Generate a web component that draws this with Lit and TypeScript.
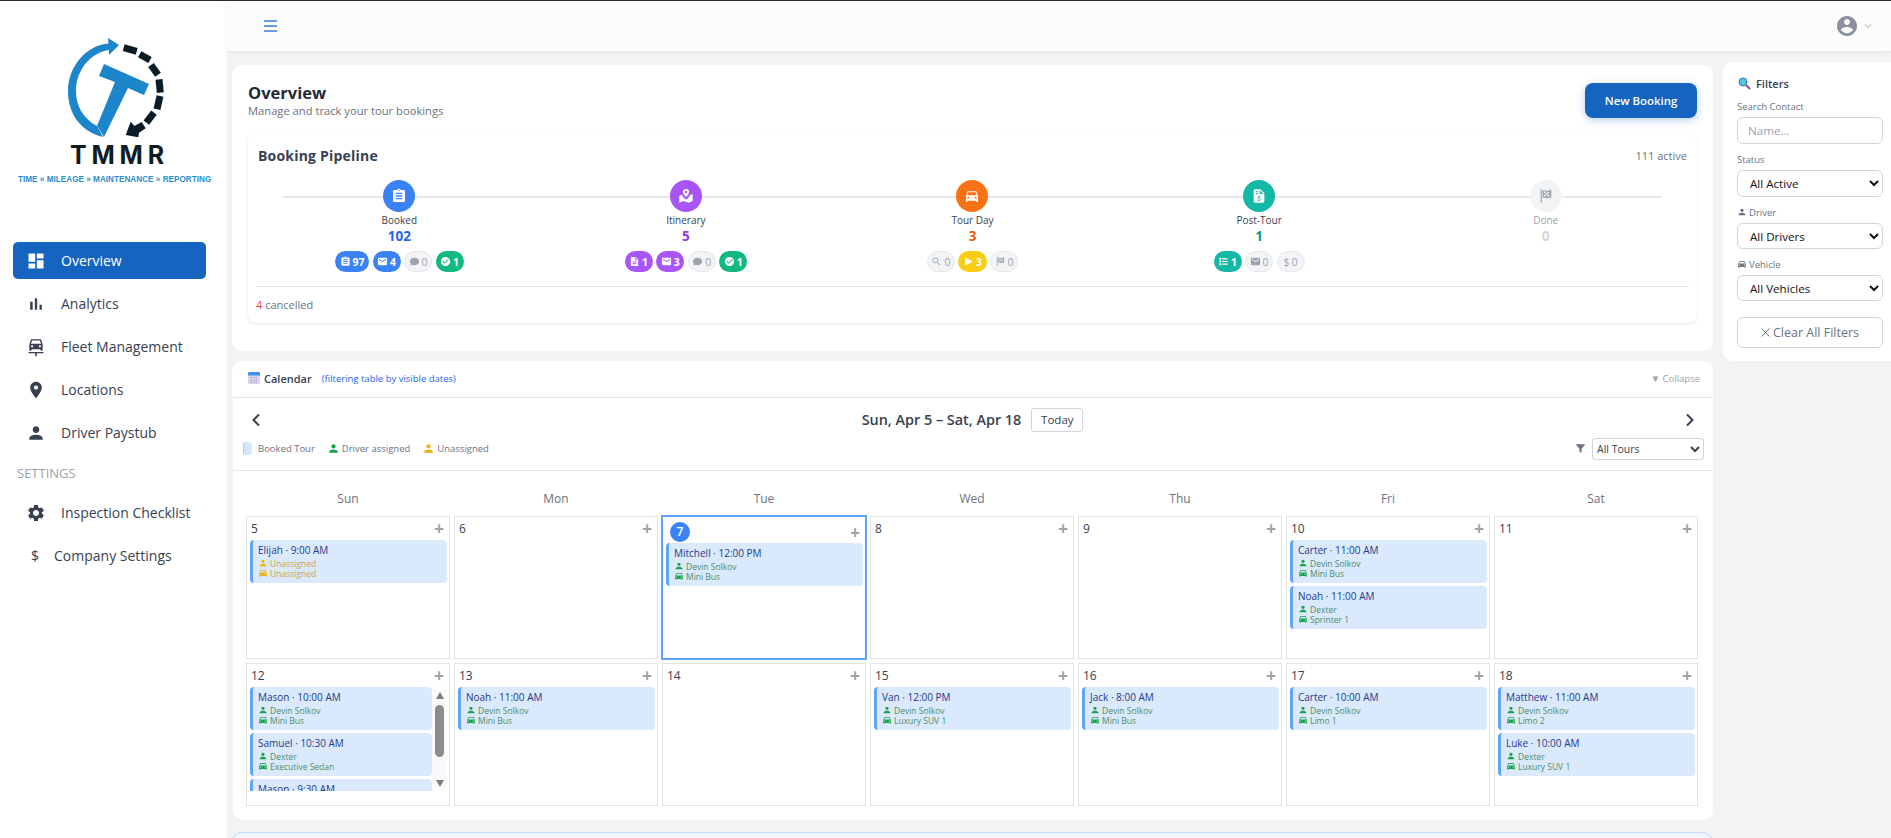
import { LitElement, css, html, svg, nothing } from "lit";
import { customElement } from "lit/decorators.js";

const ICONS: Record<string, string> = {
  dashboard: "M3 13h8V3H3v10zm0 8h8v-6H3v6zm10 0h8V11h-8v10zm0-18v6h8V3h-8z",
  chart: "M5 9.2h3V19H5zM10.6 5h2.8v14h-2.8zm5.6 8H19v6h-2.8z",
  fleet:
    "M18.3 3.6c-.2-.6-.7-1-1.3-1H7c-.6 0-1.1.4-1.3 1L4 9v6.500c0 .5.4.9.9.9h.9c.5 0 .9-.4.9-.9v-.9h10.600v.9c0 .5.4.9.9.9h.9c.5 0 .9-.4.9-.9V9l-1.700-5.400zM7.300 12.500c-.7 0-1.300-.6-1.300-1.300s.6-1.300 1.300-1.300 1.300.6 1.300 1.300-.6 1.300-1.300 1.300zm9.400 0c-.7 0-1.300-.6-1.300-1.300s.6-1.300 1.300-1.300 1.300.6 1.300 1.300-.6 1.300-1.300 1.300zM6 8l1.300-3.800h9.400L18 8H6zM3 18h18v1.600h-8V23h-2v-3.400H3z",
  pin: "M12 2C8.130 2 5 5.130 5 9c0 5.250 7 13 7 13s7-7.750 7-13c0-3.870-3.130-7-7-7zm0 9.500c-1.380 0-2.500-1.120-2.500-2.500s1.120-2.500 2.500-2.500 2.500 1.120 2.500 2.500-1.120 2.500-2.500 2.500z",
  person: "M12 12c2.210 0 4-1.790 4-4s-1.790-4-4-4-4 1.790-4 4 1.790 4 4 4zm0 2c-2.670 0-8 1.340-8 4v2h16v-2c0-2.660-5.330-4-8-4z",
  gear: "M19.140 12.940c.04-.3.06-.61.06-.94 0-.32-.02-.64-.07-.94l2.030-1.580c.18-.14.23-.41.12-.61l-1.920-3.320c-.12-.22-.37-.29-.59-.22l-2.390.96c-.5-.38-1.030-.7-1.620-.94l-.36-2.540c-.04-.24-.24-.41-.48-.41h-3.840c-.24 0-.43.17-.47.41l-.36 2.540c-.59.24-1.130.57-1.620.94l-2.390-.96c-.22-.08-.47 0-.59.22L2.740 8.870c-.12.21-.08.47.12.61l2.030 1.580c-.05.3-.09.63-.09.94s.02.64.07.94l-2.030 1.580c-.18.14-.23.41-.12.61l1.920 3.320c.12.22.37.29.59.22l2.390-.96c.5.38 1.030.7 1.620.94l.36 2.540c.05.24.24.41.48.41h3.840c.24 0 .44-.17.47-.41l.36-2.540c.59-.24 1.130-.56 1.620-.94l2.390.96c.22.08.47 0 .59-.22l1.920-3.320c.12-.22.07-.47-.12-.61l-2.010-1.580zM12 15.600c-1.980 0-3.600-1.620-3.600-3.600s1.620-3.600 3.600-3.600 3.600 1.620 3.600 3.600-1.620 3.600-3.600 3.600z",
  clipboard:
    "M19 3h-4.180C14.400 1.840 13.300 1 12 1c-1.300 0-2.400.84-2.820 2H5c-1.100 0-2 .9-2 2v14c0 1.100.9 2 2 2h14c1.100 0 2-.9 2-2V5c0-1.100-.9-2-2-2zm-7 0c.55 0 1 .45 1 1s-.45 1-1 1-1-.45-1-1 .45-1 1-1zm5 14H7v-2h10v2zm0-4H7v-2h10v2zm0-4H7V7h10v2z",
  map: "M12 1.500c-2.600 0-4.700 2-4.700 4.500 0 2.300 3.100 5.800 4.700 7.500 1.600-1.700 4.700-5.200 4.700-7.500 0-2.500-2.100-4.500-4.700-4.500zm0 6.300c-1 0-1.800-.8-1.800-1.800s.8-1.800 1.800-1.800 1.800.8 1.800 1.800-.8 1.800-1.800 1.800zM5.500 10 2 11.500V22l6-2.500 8 2.500 6-2.500V9l-3.700 1.400c-1 2-2.900 4.300-5 6.300h-2.600c-1.900-1.800-3.500-3.800-4.700-5.700z",
  car: "M18.920 6.010C18.720 5.420 18.160 5 17.500 5h-11c-.66 0-1.210.42-1.420 1.010L3 12v8c0 .55.45 1 1 1h1c.55 0 1-.45 1-1v-1h12v1c0 .55.45 1 1 1h1c.55 0 1-.45 1-1v-8l-2.080-5.990zM6.500 16c-.83 0-1.500-.67-1.500-1.500S5.670 13 6.500 13s1.500.67 1.500 1.500S7.330 16 6.500 16zm11 0c-.83 0-1.500-.67-1.500-1.500s.67-1.500 1.500-1.500 1.500.67 1.500 1.500-.67 1.500-1.500 1.500zM5 11l1.500-4.500h11L19 11H5z",
  invoice:
    "M14 2H6c-1.100 0-2 .9-2 2v16c0 1.100.9 2 2 2h12c1.100 0 2-.9 2-2V8l-6-6zM7 5h4v1.500H7V5zm0 3h4v1.500H7V8zm5.800 11v1.200h-1.500V19c-1-.2-1.800-.8-1.900-1.800h1.200c.1.500.6.8 1.400.8s1.200-.3 1.200-.8c0-.4-.3-.7-1.300-.9-1.300-.3-2.200-.8-2.200-1.900 0-.9.7-1.500 1.600-1.700V11.500h1.500v1.200c1 .2 1.600.9 1.600 1.800h-1.200c0-.6-.4-.9-1.100-.9s-1.200.3-1.200.8c0 .4.4.6 1.300.9 1 .2 2.200.6 2.200 1.900 0 1-.7 1.600-1.600 1.800zM13 9V3.500L18.500 9H13z",
  flag: "M4 2h1.800v20H4zM7 3.500c3-1 5 .8 7.500.6 1.900-.1 3.500-.6 5.500-1.300v11.400c-2 .8-3.600 1.200-5.500 1.300-2.500.2-4.500-1.500-7.500-.6V3.500zm2 1.400v2.500l2.500.3V5.200L9 4.900zm5 1.200v2.500l3-.4V5.700l-3 .4zM11.500 7.700v2.500l2.500.4V8.100l-2.500-.4zM9 9.900v2.500l2.500-.2v-2l-2.500-.3zm5 .7v2.500l3-.5V10.200l-3 .4z",
  mail: "M20 4H4c-1.100 0-2 .9-2 2v12c0 1.100.9 2 2 2h16c1.100 0 2-.9 2-2V6c0-1.100-.9-2-2-2zm0 4-8 5-8-5V6l8 5 8-5v2z",
  comment: "M12 4C6.500 4 2 7.600 2 12c0 1.900.8 3.600 2.200 5L3 21l4.600-1.800c1.400.5 2.900.8 4.400.8 5.500 0 10-3.600 10-8s-4.500-8-10-8z",
  check:
    "M12 2C6.480 2 2 6.480 2 12s4.480 10 10 10 10-4.480 10-10S17.520 2 12 2zm-2 15-5-5 1.410-1.410L10 14.170l7.590-7.590L19 8l-9 9z",
  file: "M14 2H6c-1.100 0-2 .9-2 2v16c0 1.100.9 2 2 2h12c1.100 0 2-.9 2-2V8l-6-6zm2 16H8v-2h8v2zm0-4H8v-2h8v2zm-3-5V3.500L18.500 9H13z",
  search:
    "M15.500 14h-.79l-.28-.27C15.410 12.590 16 11.110 16 9.500 16 5.910 13.090 3 9.500 3S3 5.910 3 9.500 5.910 16 9.500 16c1.610 0 3.090-.59 4.230-1.570l.27.28v.79l5 4.990L20.490 19l-4.990-5zm-6 0C7.010 14 5 11.990 5 9.500S7.010 5 9.500 5 14 7.010 14 9.500 11.990 14 9.500 14z",
  play: "M5 3l16 9-16 9z",
  list: "M9 5h12v2.500H9zm0 5.800h12v2.500H9zm0 5.700h12V19H9zM3 4h4v4H3zm0 6h4v4H3zm0 6h4v4H3z",
  filter: "M3 4h18l-7 8.500V20l-4-2v-5.500z",
};

const icon = (name: string, size: number) => html`<svg class="ic" width=${size} height=${size} viewBox="0 0 24 24" fill="currentColor"><path d=${ICONS[name]}></path></svg>`;

const NAV = [
  { label: "Overview", icon: "dashboard", active: true },
  { label: "Analytics", icon: "chart" },
  { label: "Fleet Management", icon: "fleet" },
  { label: "Locations", icon: "pin" },
  { label: "Driver Paystub", icon: "person" },
];

type Chip = { icon?: string; n: number; on?: string };

const STAGES: { label: string; icon: string; count: number; color: string; num: string; chips: Chip[] }[] = [
  {
    label: "Booked", icon: "clipboard", count: 102, color: "#3b82f6", num: "#2563eb",
    chips: [
      { icon: "clipboard", n: 97, on: "#3b82f6" },
      { icon: "mail", n: 4, on: "#3b82f6" },
      { icon: "comment", n: 0 },
      { icon: "check", n: 1, on: "#10b981" },
    ],
  },
  {
    label: "Itinerary", icon: "map", count: 5, color: "#a855f7", num: "#9333ea",
    chips: [
      { icon: "file", n: 1, on: "#a855f7" },
      { icon: "mail", n: 3, on: "#a855f7" },
      { icon: "comment", n: 0 },
      { icon: "check", n: 1, on: "#10b981" },
    ],
  },
  {
    label: "Tour Day", icon: "car", count: 3, color: "#f97316", num: "#ea580c",
    chips: [
      { icon: "search", n: 0 },
      { icon: "play", n: 3, on: "#facc15" },
      { icon: "flag", n: 0 },
    ],
  },
  {
    label: "Post-Tour", icon: "invoice", count: 1, color: "#14b8a6", num: "#0d9488",
    chips: [
      { icon: "list", n: 1, on: "#14b8a6" },
      { icon: "mail", n: 0 },
      { n: 0 },
    ],
  },
  { label: "Done", icon: "flag", count: 0, color: "#f3f4f6", num: "#d1d5db", chips: [] },
];

type Ev = { title: string; driver?: string; vehicle?: string };

const WEEKDAYS = ["Sun", "Mon", "Tue", "Wed", "Thu", "Fri", "Sat"];

const DAYS: { d: number; today?: boolean; scroll?: boolean; events?: Ev[] }[] = [
  { d: 5, events: [{ title: "Elijah · 9:00 AM" }] },
  { d: 6 },
  { d: 7, today: true, events: [{ title: "Mitchell · 12:00 PM", driver: "Devin Solkov", vehicle: "Mini Bus" }] },
  { d: 8 },
  { d: 9 },
  {
    d: 10,
    events: [
      { title: "Carter · 11:00 AM", driver: "Devin Solkov", vehicle: "Mini Bus" },
      { title: "Noah · 11:00 AM", driver: "Dexter", vehicle: "Sprinter 1" },
    ],
  },
  { d: 11 },
  {
    d: 12,
    scroll: true,
    events: [
      { title: "Mason · 10:00 AM", driver: "Devin Solkov", vehicle: "Mini Bus" },
      { title: "Samuel · 10:30 AM", driver: "Dexter", vehicle: "Executive Sedan" },
      { title: "Mason · 9:30 AM", driver: "Devin Solkov", vehicle: "Mini Bus" },
    ],
  },
  { d: 13, events: [{ title: "Noah · 11:00 AM", driver: "Devin Solkov", vehicle: "Mini Bus" }] },
  { d: 14 },
  { d: 15, events: [{ title: "Van · 12:00 PM", driver: "Devin Solkov", vehicle: "Luxury SUV 1" }] },
  { d: 16, events: [{ title: "Jack · 8:00 AM", driver: "Devin Solkov", vehicle: "Mini Bus" }] },
  { d: 17, events: [{ title: "Carter · 10:00 AM", driver: "Devin Solkov", vehicle: "Limo 1" }] },
  {
    d: 18,
    events: [
      { title: "Matthew · 11:00 AM", driver: "Devin Solkov", vehicle: "Limo 2" },
      { title: "Luke · 10:00 AM", driver: "Dexter", vehicle: "Luxury SUV 1" },
    ],
  },
];

// dashes of the logo ring, [x1, y1, x2, y2]
const DASHES = [
  [123.7, 47.7, 136.7, 51.3],
  [139.7, 54.3, 150, 60],
  [151, 65, 158, 74.7],
  [159, 79.3, 160.3, 92.7],
  [160, 96, 157, 109.3],
  [154, 112.7, 146.3, 122.7],
];

@customElement("app-root")
export class AppRoot extends LitElement {
  static styles = css`
    :host {
      display: block;
      height: 838px;
      overflow: hidden;
      font-family: "Open Sans", "Noto Sans", sans-serif;
      color: #374151;
      background: #f2f3f5;
    }
    * {
      box-sizing: border-box;
    }
    .ic {
      flex: none;
      display: block;
    }
    .shell {
      display: flex;
      height: 838px;
      border-top: 1px solid #2b2d31;
    }

    /* sidebar */
    .side {
      flex: none;
      width: 227px;
      background: #fff;
    }
    .logo {
      display: flex;
      flex-direction: column;
      height: 241px;
    }
    .logo svg {
      display: block;
      margin-top: 36px;
      margin-left: 60px;
    }
    .tmmr {
      margin: -8px 0 0 70px;
      font: 700 25px/28px "Inter", sans-serif;
      letter-spacing: 4.8px;
      color: #0f1c25;
    }
    .strap {
      margin: 6px 0 0 18px;
      font: 700 8.2px/10px "Liberation Sans", sans-serif;
      color: #2a8fd0;
      white-space: nowrap;
    }
    .nav {
      display: flex;
      align-items: center;
      height: 37px;
      margin: 0 21px 6px 13px;
      padding-left: 13px;
      border-radius: 5px;
      font-size: 14px;
      color: #374151;
      gap: 15px;
    }
    .nav.on {
      background: #1565c0;
      color: #fff;
    }
    .nav.money {
      gap: 0;
    }
    .nav .dollar {
      width: 28px;
      padding-left: 5px;
      font-size: 14px;
    }
    .group {
      margin: 12px 0 11px 17px;
      height: 20px;
      line-height: 20px;
      font-size: 13px;
      color: #9ca3af;
    }

    /* right side */
    .right {
      flex: 1;
      min-width: 0;
      display: flex;
      flex-direction: column;
    }
    .top {
      flex: none;
      height: 50px;
      background: #fbfcfb;
      box-shadow: 0 1px 5px rgba(0, 0, 0, 0.07);
      display: flex;
      align-items: center;
      justify-content: space-between;
      padding: 0 19px 0 37px;
    }
    .burger {
      width: 13px;
      height: 12px;
      border-top: 2px solid #6a9bdc;
      border-bottom: 2px solid #6a9bdc;
      position: relative;
    }
    .burger::after {
      content: "";
      position: absolute;
      left: 0;
      right: 0;
      top: 3px;
      height: 2px;
      background: #6a9bdc;
    }
    .user {
      display: flex;
      align-items: center;
      gap: 5px;
      color: #8a92a0;
    }
    .body {
      flex: 1;
      min-height: 0;
      display: flex;
      gap: 10px;
      padding: 11px 0 0 5px;
      align-items: flex-start;
    }
    .main {
      flex: none;
      width: 1481px;
      margin-top: 3px;
      display: flex;
      flex-direction: column;
    }
    .card {
      background: #fff;
      border-radius: 10px;
    }

    /* overview */
    .over {
      height: 286px;
      padding: 18px 16px 0;
      margin-bottom: 10px;
    }
    .over-head {
      display: flex;
      justify-content: space-between;
      height: 35px;
      margin-bottom: 17px;
    }
    h1 {
      margin: 0 0 1px;
      font-size: 16.500px;
      line-height: 19px;
      font-weight: 700;
      color: #1f2937;
    }
    .sub {
      font-size: 11.2px;
      line-height: 15px;
      color: #6b7280;
    }
    .btn-new {
      width: 112px;
      height: 35px;
      border: 0;
      border-radius: 8px;
      background: #1565c0;
      color: #fff;
      font: 600 11.4px "Open Sans", sans-serif;
      box-shadow: 0 2px 8px rgba(21, 101, 192, 0.3);
    }
    .pipe {
      height: 188px;
      border-radius: 8px;
      box-shadow: 0 1px 3px rgba(0, 0, 0, 0.12);
      padding: 10px 8px 0;
    }
    .pipe-head {
      display: flex;
      justify-content: space-between;
      align-items: center;
      height: 20px;
      padding: 0 2px;
      margin-bottom: 15px;
    }
    .pipe-head b {
      font-size: 14px;
      font-weight: 700;
      letter-spacing: 0.2px;
      color: #374151;
    }
    .pipe-head span {
      font-size: 11px;
      color: #6b7280;
    }
    .stages {
      position: relative;
      display: grid;
      grid-template-columns: repeat(5, 1fr);
      height: 93px;
    }
    .stages::before {
      content: "";
      position: absolute;
      left: 27px;
      right: 27px;
      top: 16px;
      height: 2px;
      background: #e5e7eb;
    }
    .stage {
      position: relative;
      display: flex;
      flex-direction: column;
      align-items: center;
    }
    .dot {
      width: 32px;
      height: 32px;
      border-radius: 50%;
      display: flex;
      align-items: center;
      justify-content: center;
      color: #fff;
    }
    .stage .lab {
      font-size: 10px;
      line-height: 16px;
      color: #374151;
    }
    .stage .num {
      font-size: 13.5px;
      line-height: 17px;
      font-weight: 700;
    }
    .stage.done .dot {
      color: #9ca3af;
    }
    .stage.done .lab {
      color: #9ca3af;
    }
    .chips {
      display: flex;
      gap: 3.500px;
      margin-top: 6px;
    }
    .chip {
      height: 21px;
      min-width: 28px;
      padding: 0 3.500px;
      border-radius: 11px;
      border: 1px solid #e5e7eb;
      background: #f3f4f6;
      color: #9ca3af;
      display: flex;
      align-items: center;
      justify-content: center;
      gap: 2px;
      font-size: 10.5px;
    }
    .chip.on {
      border-color: transparent;
      color: #fff;
      font-weight: 700;
    }
    .cancel {
      margin-top: 13px;
      border-top: 1px solid #e5e7eb;
      height: 36px;
      line-height: 35px;
      font-size: 11px;
      color: #6b7280;
    }
    .cancel i {
      font-style: normal;
      color: #ef4444;
    }

    /* calendar bar */
    .calbar {
      height: 36px;
      border-radius: 10px 10px 0 0;
      display: flex;
      align-items: center;
      gap: 3px;
      padding: 0 3px 2px 15px;
      margin-bottom: 1px;
      box-shadow: 0 1px 0 #e8e9ec;
    }
    .calbar b {
      font-size: 11px;
      font-weight: 600;
      color: #374151;
    }
    .calbar .note {
      margin-left: 7px;
      font-size: 9.5px;
      color: #2563eb;
    }
    .calbar .collapse {
      margin-left: auto;
      margin-right: 10px;
      font-size: 9.5px;
      color: #9ca3af;
    }

    /* calendar */
    .cal {
      height: 422px;
      margin-left: 1px;
      border-radius: 0 0 10px 10px;
      margin-bottom: 12px;
    }
    .cal-nav {
      display: flex;
      align-items: center;
      justify-content: space-between;
      height: 34px;
      padding: 9px 11px 0;
    }
    .cal-nav .mid {
      display: flex;
      align-items: center;
      gap: 10px;
      margin-right: 1px;
    }
    .cal-nav .mid span {
      font-size: 14.4px;
      font-weight: 600;
      color: #374151;
    }
    .today {
      width: 52px;
      height: 24px;
      padding: 0;
      background: #fff;
      border: 1px solid #d1d5db;
      border-radius: 3px;
      font: 11.5px "Open Sans", sans-serif;
      color: #374151;
    }
    .chev {
      width: 24px;
      display: flex;
      justify-content: center;
      color: #374151;
    }
    .cal-tools {
      display: flex;
      align-items: center;
      justify-content: space-between;
      height: 39px;
      padding: 0 9px 5px 10px;
      border-bottom: 1px solid #e5e7eb;
      font-size: 9.5px;
      color: #6b7280;
    }
    .legend {
      display: flex;
      align-items: center;
    }
    .legend .sw {
      width: 9px;
      height: 13px;
      margin-right: 6px;
      border-radius: 3px;
      background: #d6e6fd;
      border-left: 1.5px solid #a9cbf9;
    }
    .legend .ic {
      margin-right: 2px;
    }
    .legend span {
      margin-right: 12px;
    }
    .tour-filter {
      display: flex;
      align-items: center;
      gap: 5px;
      color: #6b7280;
    }
    .tour-filter select {
      width: 112px;
      height: 22px;
      font: 10.5px "Open Sans", sans-serif;
      color: #374151;
      background: #fff;
      border: 1px solid #d1d5db;
      border-radius: 3px;
    }
    .dow {
      display: grid;
      grid-template-columns: repeat(7, 204px);
      gap: 4px;
      padding-left: 13px;
      height: 45px;
      line-height: 56px;
      text-align: center;
      font-size: 12px;
      color: #6b7280;
    }
    .grid {
      display: grid;
      grid-template-columns: repeat(7, 204px);
      grid-auto-rows: 143px;
      gap: 4px;
      padding-left: 13px;
    }
    .cell {
      border: 1px solid #e3e3e3;
      padding: 0 2px 0 3px;
      min-width: 0;
    }
    .cell.now {
      border: 1.5px solid #60a5fa;
      outline: 1px solid #60a5fa;
    }
    .date {
      display: flex;
      align-items: center;
      justify-content: space-between;
      height: 23px;
      padding: 0 3px 1px 1px;
      font-size: 12px;
      color: #374151;
    }
    .cell.now .date {
      height: 26px;
      padding: 4px 3px 0 4px;
    }
    .date .circle {
      width: 20px;
      height: 20px;
      border-radius: 50%;
      background: #3b82f6;
      color: #fff;
      text-align: center;
      line-height: 20px;
      font-weight: 600;
    }
    .plus {
      color: #9ca3af;
      font-size: 17px;
      font-weight: 700;
      line-height: 1;
    }
    .events {
      display: flex;
      flex-direction: column;
      gap: 3px;
    }
    .ev {
      flex: none;
      height: 43px;
      padding: 2px 0 0 5px;
      border-left: 3px solid #60a5fa;
      border-radius: 4px;
      background: #dbe9fd;
      overflow: hidden;
    }
    .ev .t {
      font-size: 10px;
      line-height: 16px;
      font-weight: 500;
      color: #1e3a8a;
      white-space: nowrap;
    }
    .ev .m {
      display: flex;
      align-items: center;
      gap: 2px;
      height: 10px;
      font-size: 8.5px;
      color: #4b8f6a;
      white-space: nowrap;
    }
    .ev .m .ic {
      color: #16a34a;
    }
    .ev .m.none {
      color: #d9a13f;
    }
    .ev .m.none .ic {
      color: #eab308;
    }
    .scroller {
      display: flex;
      height: 104px;
    }
    .scroller .events {
      width: 182px;
      overflow: hidden;
    }
    .bar {
      width: 15px;
      flex: none;
      background: #fafafa;
      display: flex;
      flex-direction: column;
      align-items: center;
      padding: 5px 0 4px;
    }
    .bar .thumb {
      width: 9px;
      height: 52px;
      margin-top: 6px;
      border-radius: 4.5px;
      background: #8c8c8c;
    }
    .bar .up,
    .bar .down {
      width: 0;
      height: 0;
      border-left: 4.5px solid transparent;
      border-right: 4.5px solid transparent;
    }
    .bar .up {
      border-bottom: 7px solid #7d7d7d;
    }
    .bar .down {
      margin-top: auto;
      border-top: 7px solid #7d7d7d;
    }
    .next {
      height: 40px;
      border: 1px solid #bfdbfe;
      border-radius: 10px;
      background: #f0f6ff;
    }

    /* filters */
    .filters {
      flex: 1;
      height: 299px;
      border-radius: 10px 0 0 10px;
      padding: 12px 8px 0 14px;
    }
    .filters h3 {
      display: flex;
      align-items: center;
      gap: 5px;
      margin: 0 0 6px;
      height: 18px;
      padding-left: 1px;
      font-size: 11px;
      font-weight: 600;
      color: #374151;
    }
    .filters label {
      display: flex;
      align-items: center;
      gap: 2px;
      height: 18px;
      padding-bottom: 2px;
      margin-bottom: 1px;
      font-size: 9.5px;
      color: #6b7280;
    }
    .filters input,
    .filters select {
      display: block;
      width: 146px;
      height: 27px;
      margin: 0 0 7px;
      border: 1px solid #d1d5db;
      border-radius: 6px;
      background: #fff;
      font: 11.6px "Open Sans", sans-serif;
      color: #111;
    }
    .filters select.short {
      height: 26px;
    }
    .filters input {
      padding: 0 10px;
    }
    .filters input::placeholder {
      color: #9ca3af;
    }
    .filters select {
      padding: 0 8px;
    }
    .clear {
      display: flex;
      align-items: center;
      justify-content: center;
      gap: 3px;
      width: 146px;
      height: 31px;
      margin-top: 16px;
      padding: 0;
      border: 1px solid #d1d5db;
      border-radius: 6px;
      background: #fff;
      font: 12.5px "Open Sans", sans-serif;
      color: #6b7280;
    }
  `;

  renderLogo() {
    return html`<svg width="110" height="112" viewBox="60 37 110 112">
      <path fill="#1d85c9" d="M103 137C79 131 68 112 68 91 68 66 87 45 108.500 43.500L108 38 119 45 109 55 109 50C92 52 76 69 76 91 76 107 84 119 97 126z"></path>
      <path fill="#1d85c9" d="M104 64 149 84 144 95 128 88 104 137 97 126 115 82 99 76z"></path>
      ${DASHES.map(
        ([a, b, c, d]) => svg`<line x1=${a} y1=${b} x2=${c} y2=${d} stroke="#0a1c26" stroke-width="7"></line>`,
      )}
      <path fill="#0a1c26" d="M125.700 135 130.700 121.700 134.300 126 141.700 122 145.700 128.300 139 132.700 138.300 137.300z"></path>
    </svg>`;
  }

  renderChip(c: Chip) {
    return html`<div class="chip ${c.on ? "on" : ""}" style=${c.on ? `background:${c.on}` : ""}>
      ${c.icon ? icon(c.icon, 11) : html`<span>$</span>`}<span>${c.n}</span>
    </div>`;
  }

  renderEvent(e: Ev) {
    return html`<div class="ev">
      <div class="t">${e.title}</div>
      <div class="m ${e.driver ? "" : "none"}">${icon("person", 10)}${e.driver ?? "Unassigned"}</div>
      <div class="m ${e.vehicle ? "" : "none"}">${icon("car", 10)}${e.vehicle ?? "Unassigned"}</div>
    </div>`;
  }

  renderDay(day: (typeof DAYS)[number]) {
    const events = html`<div class="events">${(day.events ?? []).map((e) => this.renderEvent(e))}</div>`;
    return html`<div class="cell ${day.today ? "now" : ""}">
      <div class="date">
        ${day.today ? html`<span class="circle">${day.d}</span>` : html`<span>${day.d}</span>`}
        <span class="plus">+</span>
      </div>
      ${day.scroll
        ? html`<div class="scroller">
            ${events}
            <div class="bar"><div class="up"></div><div class="thumb"></div><div class="down"></div></div>
          </div>`
        : events}
    </div>`;
  }

  render() {
    return html`<div class="shell">
      <aside class="side">
        <div class="logo">
          ${this.renderLogo()}
          <div class="tmmr">TMMR</div>
          <div class="strap">TIME » MILEAGE » MAINTENANCE » REPORTING</div>
        </div>
        ${NAV.map(
          (n) => html`<div class="nav ${n.active ? "on" : ""}">${icon(n.icon, 20)}<span>${n.label}</span></div>`,
        )}
        <div class="group">SETTINGS</div>
        <div class="nav">${icon("gear", 20)}<span>Inspection Checklist</span></div>
        <div class="nav money"><span class="dollar">$</span><span>Company Settings</span></div>
      </aside>

      <div class="right">
        <header class="top">
          <div class="burger"></div>
          <div class="user">
            <svg width="24" height="24" viewBox="0 0 24 24" fill="currentColor">
              <path d="M12 2C6.480 2 2 6.480 2 12s4.480 10 10 10 10-4.480 10-10S17.520 2 12 2zm0 3c1.660 0 3 1.340 3 3s-1.340 3-3 3-3-1.340-3-3 1.340-3 3-3zm0 14.200c-2.500 0-4.710-1.280-6-3.220.03-1.990 4-3.080 6-3.080s5.970 1.090 6 3.080c-1.290 1.940-3.500 3.220-6 3.220z"></path>
            </svg>
            <svg width="8" height="6" viewBox="0 0 8 6" fill="none" stroke="#9ca3af"><path d="M1 1.500l3 3 3-3"></path></svg>
          </div>
        </header>

        <div class="body">
          <div class="main">
            <section class="card over">
              <div class="over-head">
                <div>
                  <h1>Overview</h1>
                  <div class="sub">Manage and track your tour bookings</div>
                </div>
                <button class="btn-new">New Booking</button>
              </div>
              <div class="pipe">
                <div class="pipe-head"><b>Booking Pipeline</b><span>111 active</span></div>
                <div class="stages">
                  ${STAGES.map(
                    (s) => html`<div class="stage ${s.label === "Done" ? "done" : ""}">
                      <div class="dot" style="background:${s.color}">${icon(s.icon, 16)}</div>
                      <div class="lab">${s.label}</div>
                      <div class="num" style="color:${s.num}">${s.count}</div>
                      ${s.chips.length ? html`<div class="chips">${s.chips.map((c) => this.renderChip(c))}</div>` : nothing}
                    </div>`,
                  )}
                </div>
                <div class="cancel"><i>4</i> cancelled</div>
              </div>
            </section>

            <div class="card calbar">
              <svg width="14" height="14" viewBox="0 0 14 14">
                <rect x="1" y="1" width="12" height="12" rx="1.500" fill="#dcd3ee"></rect>
                <path d="M1 4.500V2.500A1.500 1.500 0 0 1 2.500 1h9A1.500 1.500 0 0 1 13 2.500v2z" fill="#3b8fe8"></path>
                <path d="M3.500 6.500h7M3.500 9h7M3.500 11h7" stroke="#a79cc4" stroke-width="1" stroke-dasharray="1.500 1"></path>
              </svg>
              <b>Calendar</b>
              <span class="note">(filtering table by visible dates)</span>
              <span class="collapse">▼ Collapse</span>
            </div>

            <section class="card cal">
              <div class="cal-nav">
                <div class="chev"><svg width="10" height="14" viewBox="0 0 10 14" fill="none" stroke="currentColor" stroke-width="2"><path d="M8 1.500 2.500 7 8 12.500"></path></svg></div>
                <div class="mid"><span>Sun, Apr 5 – Sat, Apr 18</span><button class="today">Today</button></div>
                <div class="chev"><svg width="10" height="14" viewBox="0 0 10 14" fill="none" stroke="currentColor" stroke-width="2"><path d="M2 1.500 7.500 7 2 12.500"></path></svg></div>
              </div>
              <div class="cal-tools">
                <div class="legend">
                  <div class="sw"></div><span>Booked Tour</span>
                  <div style="color:#16a34a">${icon("person", 13)}</div><span>Driver assigned</span>
                  <div style="color:#eab308">${icon("person", 13)}</div><span>Unassigned</span>
                </div>
                <div class="tour-filter">
                  ${icon("filter", 13)}
                  <select><option>All Tours</option></select>
                </div>
              </div>
              <div class="dow">${WEEKDAYS.map((d) => html`<div>${d}</div>`)}</div>
              <div class="grid">${DAYS.map((d) => this.renderDay(d))}</div>
            </section>

            <div class="next"></div>
          </div>

          <aside class="card filters">
            <h3>
              <svg width="13" height="13" viewBox="0 0 13 13">
                <circle cx="5" cy="5" r="4" fill="#4fc3e8" stroke="#3b7ea1" stroke-width="1"></circle>
                <path d="M8 8l4 4" stroke="#8e4ba8" stroke-width="2"></path>
              </svg>
              Filters
            </h3>
            <label>Search Contact</label>
            <input placeholder="Name..." />
            <label>Status</label>
            <select><option>All Active</option></select>
            <label>${icon("person", 10)} Driver</label>
            <select class="short"><option>All Drivers</option></select>
            <label>${icon("car", 10)} Vehicle</label>
            <select class="short"><option>All Vehicles</option></select>
            <button class="clear">
              <svg width="9" height="9" viewBox="0 0 9 9" stroke="currentColor" fill="none"><path d="M.5.5l8 8M8.500.5l-8 8"></path></svg>
              Clear All Filters
            </button>
          </aside>
        </div>
      </div>
    </div>`;
  }
}
